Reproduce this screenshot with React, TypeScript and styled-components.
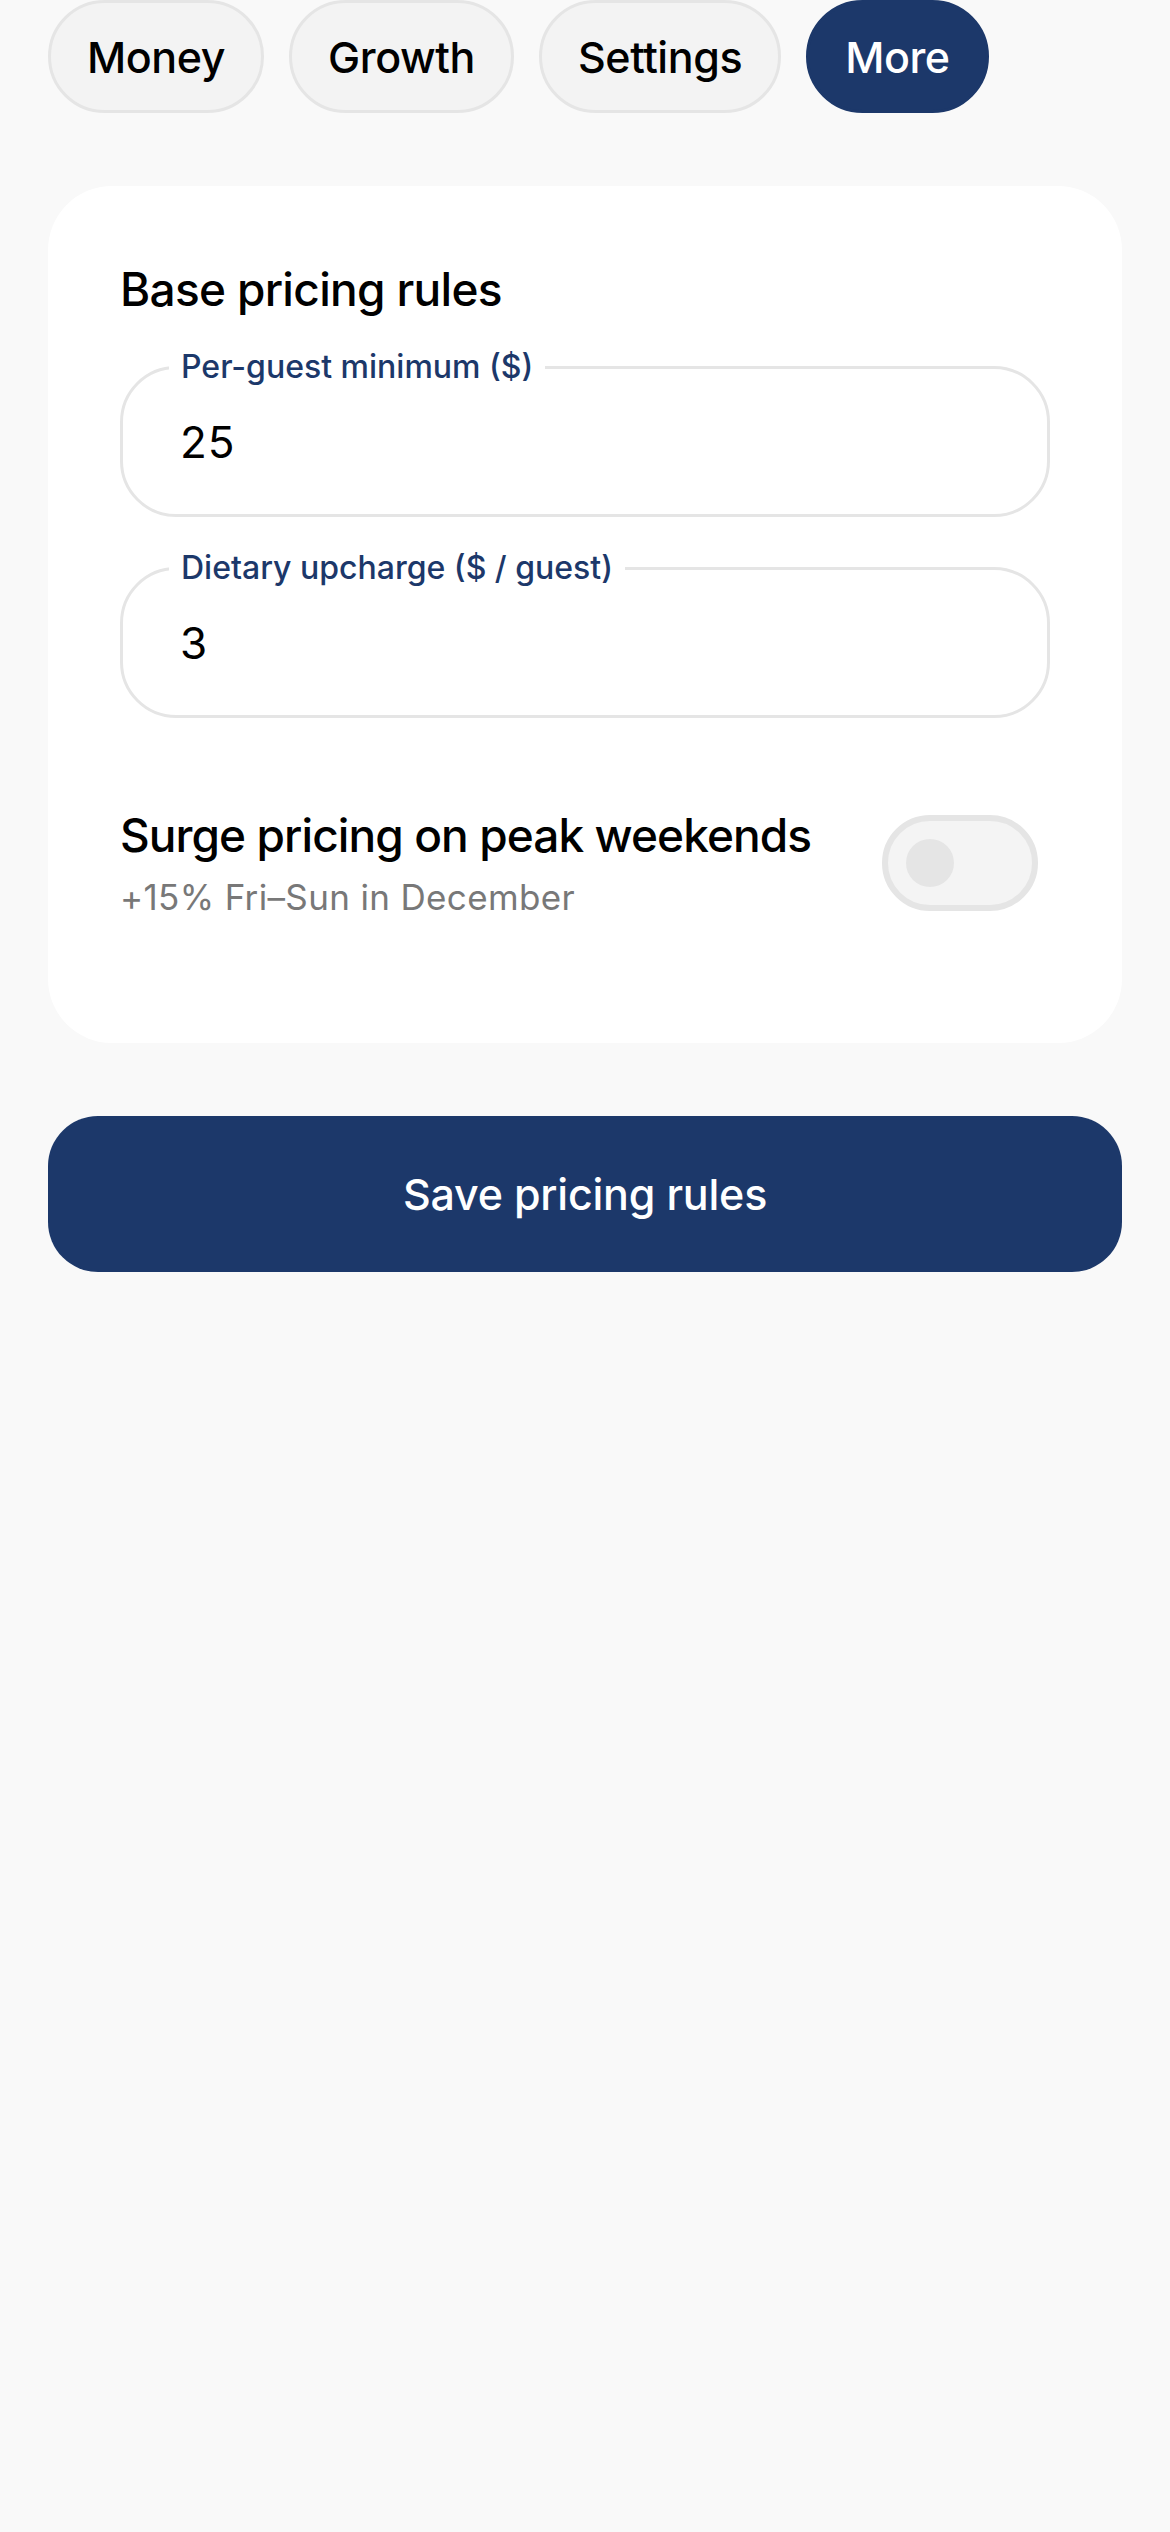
import React from 'react'
import styled, { createGlobalStyle } from 'styled-components'

const navy = '#1c386a'
const line = '#e5e5e5'

const GlobalStyle = createGlobalStyle`
  html, body {
    margin: 0;
    padding: 0;
    background: #f9f9f9;
  }
  body {
    font-family: Inter, 'Noto Sans', 'Liberation Sans', sans-serif;
    color: #000;
  }
`

const Page = styled.div`
  min-height: 2532px;
  padding: 0 48px;
  box-sizing: border-box;
  background: #f9f9f9;
`

const Tabs = styled.nav`
  display: flex;
  align-items: center;
  gap: 25px;
`

const Tab = styled.button<{ $active?: boolean }>`
  height: 113px;
  padding: 0 36px;
  border-radius: 999px;
  border: 3px solid ${({ $active }) => ($active ? navy : line)};
  background: ${({ $active }) => ($active ? navy : '#f3f3f3')};
  color: ${({ $active }) => ($active ? '#fff' : '#000')};
  font-family: Inter, sans-serif;
  font-size: 43px;
  font-weight: 500;
  letter-spacing: -0.01em;
  cursor: pointer;
`

const Card = styled.section`
  margin-top: 73px;
  background: #fff;
  border-radius: 64px;
  padding: 76px 72px 125px;
`

const Heading = styled.h2`
  margin: 0;
  font-size: 46px;
  line-height: 55px;
  font-weight: 500;
  letter-spacing: -0.015em;
`

const Field = styled.fieldset<{ $first?: boolean }>`
  margin: ${({ $first }) => ($first ? '31px' : '32px')} 0 0;
  padding: 0 40px 0 46px;
  min-width: 0;
  border: 3px solid ${line};
  border-radius: 56px;
`

const Legend = styled.legend`
  padding: 0 12px;
  font-size: 32px;
  line-height: 38px;
  font-weight: 500;
  color: ${navy};
`

const Value = styled.div`
  padding: 30px 11px 45px;
  font-size: 44px;
  line-height: 53px;
  font-weight: 400;
  letter-spacing: 0.02em;
`

const ToggleRow = styled.div`
  margin-top: 90px;
  display: flex;
  align-items: center;
  justify-content: space-between;
  gap: 24px;
`

const ToggleText = styled.div`
  display: flex;
  flex-direction: column;
  gap: 13px;
`

const ToggleTitle = styled.div`
  font-size: 46px;
  line-height: 55px;
  font-weight: 500;
  letter-spacing: -0.02em;
`

const ToggleHint = styled.div`
  font-size: 35px;
  line-height: 42px;
  letter-spacing: 0.01em;
  color: #787878;
`

const Switch = styled.button<{ $on?: boolean }>`
  flex: none;
  width: 156px;
  height: 96px;
  margin-right: 12px;
  padding: 0 0 0 18px;
  border-radius: 999px;
  border: 6px solid ${line};
  background: #f4f4f4;
  display: flex;
  align-items: center;
  justify-content: ${({ $on }) => ($on ? 'flex-end' : 'flex-start')};
  box-sizing: border-box;
`

const Knob = styled.span`
  width: 48px;
  height: 48px;
  border-radius: 50%;
  background: ${line};
`

const SaveButton = styled.button`
  display: block;
  width: 100%;
  margin-top: 73px;
  height: 156px;
  border: none;
  border-radius: 50px;
  background: ${navy};
  color: #fff;
  font-family: Inter, sans-serif;
  font-size: 43px;
  font-weight: 500;
  letter-spacing: -0.005em;
  cursor: pointer;
`

const tabs = ['Money', 'Growth', 'Settings', 'More']

export default function App() {
  return (
    <Page>
      <GlobalStyle />
      <Tabs>
        {tabs.map((t) => (
          <Tab key={t} $active={t === 'More'}>
            {t}
          </Tab>
        ))}
      </Tabs>

      <Card>
        <Heading>Base pricing rules</Heading>

        <Field $first>
          <Legend>Per-guest minimum ($)</Legend>
          <Value>25</Value>
        </Field>

        <Field>
          <Legend>Dietary upcharge ($ / guest)</Legend>
          <Value>3</Value>
        </Field>

        <ToggleRow>
          <ToggleText>
            <ToggleTitle>Surge pricing on peak weekends</ToggleTitle>
            <ToggleHint>+15% Fri–Sun in December</ToggleHint>
          </ToggleText>
          <Switch aria-label="Surge pricing">
            <Knob />
          </Switch>
        </ToggleRow>
      </Card>

      <SaveButton>Save pricing rules</SaveButton>
    </Page>
  )
}
